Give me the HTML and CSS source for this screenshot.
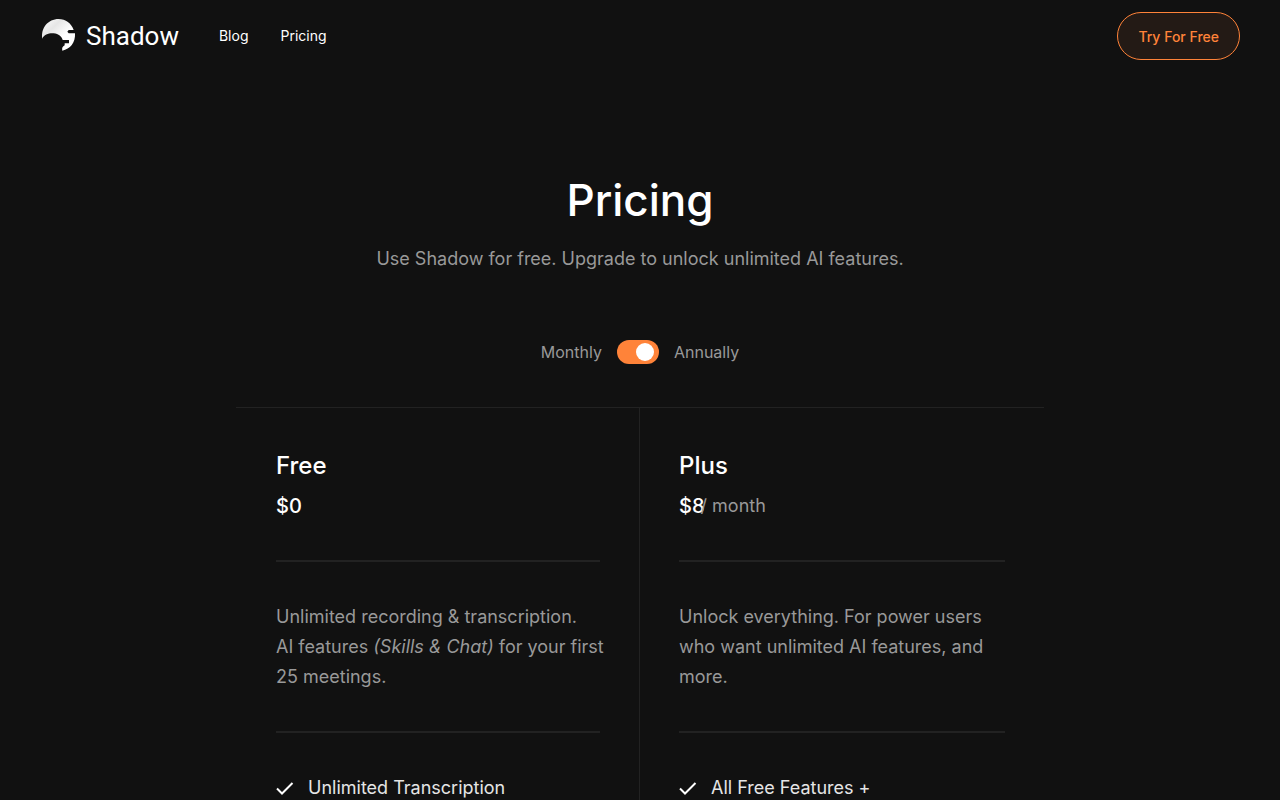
FILE: index.html
```html
<!DOCTYPE html>
<html lang="en">
<head>
    <meta charset="UTF-8">
    <meta name="viewport" content="width=device-width, initial-scale=1.0">
    <title>Pricing</title>
    <link rel="stylesheet" href="styles.css">
</head>
<body>
    <header class="header">
        <a class="logo" href="#">
            <svg class="logo-icon" viewBox="12 18 108 108" aria-hidden="true">
                <defs>
                    <linearGradient id="logoFill" x1="0" y1="0" x2="1" y2="1">
                        <stop offset="0" stop-color="#ffffff"/>
                        <stop offset="0.3" stop-color="#e6e6e6"/>
                        <stop offset="0.6" stop-color="#ffffff"/>
                    </linearGradient>
                </defs>
                <path fill="url(#logoFill)" d="M19 80C14 48 36 21 68 21C89 21 106 34 113 54H98L94 59L98 64H117C119 92 102 112 79 116C77 108 80 103 86 100V94H99V84H80C77 74 68 65 53 64C38 63 24 68 19 80Z"/>
            </svg>
            <span class="logo-text">Shadow</span>
        </a>
        <nav class="nav">
            <a href="#">Blog</a>
            <a href="#">Pricing</a>
        </nav>
        <button class="try-button" type="button">Try For Free</button>
    </header>

    <main>
        <section class="intro">
            <h1>Pricing</h1>
            <p>Use Shadow for free. Upgrade to unlock unlimited AI features.</p>
        </section>

        <div class="billing">
            <label for="billing">Monthly</label>
            <input class="switch" type="checkbox" role="switch" id="billing" checked>
            <label for="billing">Annually</label>
        </div>

        <div class="plans">
            <section class="plan plan-free">
                <h2>Free</h2>
                <p class="price">$0</p>
                <hr>
                <p class="description">Unlimited recording &amp; transcription.<br>AI features <em>(Skills &amp; Chat)</em> for your first 25 meetings.</p>
                <hr>
                <ul class="features">
                    <li>
                        <svg viewBox="0 0 18 18" aria-hidden="true"><path d="M1 9.500L6 14.500L16.500 4"/></svg>
                        Unlimited Transcription
                    </li>
                </ul>
            </section>

            <section class="plan">
                <h2>Plus</h2>
                <p class="price">$8<span class="period">/ month</span></p>
                <hr>
                <p class="description">Unlock everything. For power users who want unlimited AI features, and more.</p>
                <hr>
                <ul class="features">
                    <li>
                        <svg viewBox="0 0 18 18" aria-hidden="true"><path d="M1 9.500L6 14.500L16.500 4"/></svg>
                        All Free Features +
                    </li>
                </ul>
            </section>
        </div>
    </main>
</body>
</html>
```

FILE: styles.css
```css
* {
    box-sizing: border-box;
}

body {
    margin: 0;
    background-color: #111111;
    color: #ffffff;
    font-family: Inter, "Liberation Sans", sans-serif;
    font-size: 18px;
    line-height: 30px;
}

h1, h2, p, ul {
    margin: 0;
    padding: 0;
}

a {
    color: inherit;
    text-decoration: none;
}

.header {
    display: flex;
    align-items: center;
    padding: 12px 40px;
}

.logo {
    display: flex;
    align-items: center;
    gap: 10px;
}

.logo-icon {
    width: 36px;
    height: 36px;
}

.logo-text {
    font-family: Roboto, "Open Sans", sans-serif;
    font-size: 26px;
}

.nav {
    display: flex;
    gap: 32px;
    margin-left: 40px;
    font-size: 14px;
}

.try-button {
    height: 48px;
    margin-left: auto;
    padding: 0 20px;
    border: 1px solid #ff8339;
    border-radius: 24px;
    background-color: #231a15;
    color: #ff8339;
    font-family: inherit;
    font-size: 14px;
    font-weight: 500;
    cursor: pointer;
}

.intro {
    padding: 100px 20px 0;
    text-align: center;
    color: #999999;
}

.intro h1 {
    margin-bottom: 16px;
    color: #ffffff;
    font-size: 44px;
    font-weight: 500;
    line-height: 56px;
}

.billing {
    display: flex;
    justify-content: center;
    align-items: center;
    gap: 15px;
    margin: 63px 0 40px;
    color: #999999;
    font-size: 16px;
}

.switch {
    display: flex;
    align-items: center;
    appearance: none;
    width: 42px;
    height: 24px;
    margin: 0;
    padding: 0 5px;
    border-radius: 12px;
    background-color: #444444;
    cursor: pointer;
}

.switch::before {
    content: "";
    width: 18px;
    height: 18px;
    border-radius: 50%;
    background-color: #ffffff;
}

.switch:checked {
    justify-content: flex-end;
    background-color: #ff8339;
}

.plans {
    display: grid;
    grid-template-columns: 1fr 1fr;
    max-width: 808px;
    margin: 0 auto;
    border-top: 1px solid #222222;
}

.plan {
    padding: 40px 39px;
}

.plan-free {
    padding-left: 40px;
    border-right: 1px solid #222222;
}

.plan h2 {
    font-size: 24px;
    font-weight: 500;
    line-height: 36px;
}

.price {
    display: flex;
    align-items: center;
    margin-top: 7px;
    font-size: 20px;
    font-weight: 500;
}

.period {
    margin-left: -4px;
    color: #999999;
    font-size: 18px;
    font-weight: 400;
}

.plan hr {
    height: 2px;
    margin: 39px 0 40px;
    border: none;
    background-color: #222222;
}

.description {
    margin-right: -10px;
    color: #999999;
}

.features {
    list-style: none;
}

.features li {
    display: flex;
    align-items: center;
    gap: 14px;
    color: #e5e5e5;
}

.features svg {
    width: 18px;
    height: 18px;
    fill: none;
    stroke: #ffffff;
    stroke-width: 2;
}
```
